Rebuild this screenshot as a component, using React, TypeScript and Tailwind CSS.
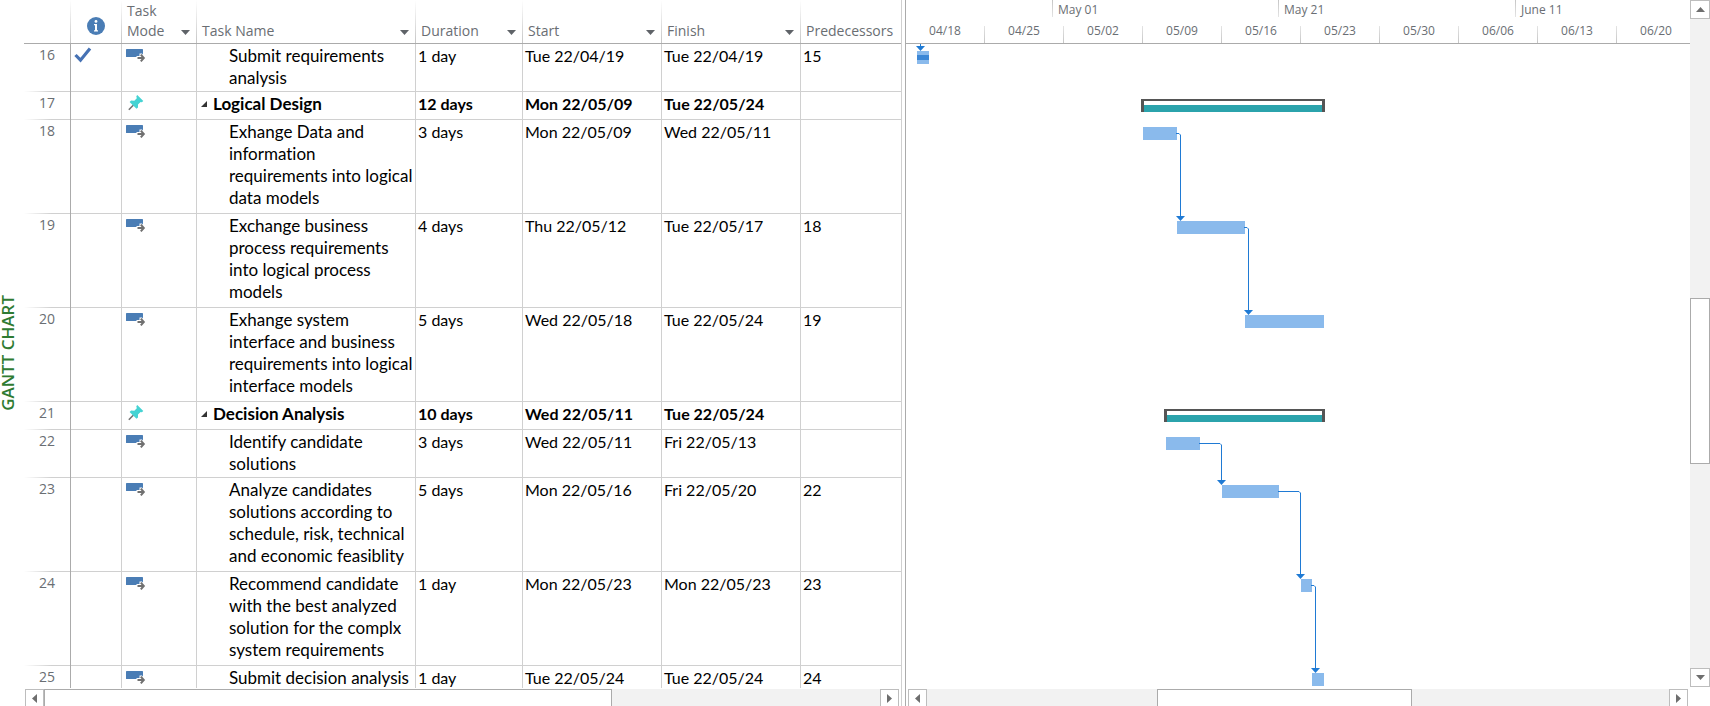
import React from "react";

type Task = {
  id: number;
  name: string;
  duration: string;
  start: string;
  finish: string;
  pred?: string;
  done?: boolean;
  summary?: boolean;
  height: string;
};

const tasks: Task[] = [
  { id: 16, name: "Submit requirements\nanalysis", duration: "1 day", start: "Tue 22/04/19", finish: "Tue 22/04/19", pred: "15", done: true, height: "h-[48px]" },
  { id: 17, name: "Logical Design", duration: "12 days", start: "Mon 22/05/09", finish: "Tue 22/05/24", summary: true, height: "h-[28px]" },
  { id: 18, name: "Exhange Data and\ninformation\nrequirements into logical\ndata models", duration: "3 days", start: "Mon 22/05/09", finish: "Wed 22/05/11", height: "h-[94px]" },
  { id: 19, name: "Exchange business\nprocess requirements\ninto logical process\nmodels", duration: "4 days", start: "Thu 22/05/12", finish: "Tue 22/05/17", pred: "18", height: "h-[94px]" },
  { id: 20, name: "Exhange system\ninterface and business\nrequirements into logical\ninterface models", duration: "5 days", start: "Wed 22/05/18", finish: "Tue 22/05/24", pred: "19", height: "h-[94px]" },
  { id: 21, name: "Decision Analysis", duration: "10 days", start: "Wed 22/05/11", finish: "Tue 22/05/24", summary: true, height: "h-[28px]" },
  { id: 22, name: "Identify candidate\nsolutions", duration: "3 days", start: "Wed 22/05/11", finish: "Fri 22/05/13", height: "h-[48px]" },
  { id: 23, name: "Analyze candidates\nsolutions according to\nschedule, risk, technical\nand economic feasiblity", duration: "5 days", start: "Mon 22/05/16", finish: "Fri 22/05/20", pred: "22", height: "h-[94px]" },
  { id: 24, name: "Recommend candidate\nwith the best analyzed\nsolution for the complx\nsystem requirements", duration: "1 day", start: "Mon 22/05/23", finish: "Mon 22/05/23", pred: "23", height: "h-[94px]" },
  { id: 25, name: "Submit decision analysis", duration: "1 day", start: "Tue 22/05/24", finish: "Tue 22/05/24", pred: "24", height: "h-[28px]" },
];

const weeks = ["04/18", "04/25", "05/02", "05/09", "05/16", "05/23", "05/30", "06/06", "06/13", "06/20"];

const months = [
  { label: "", width: "w-[147px]" },
  { label: "May 01", width: "w-[226px]" },
  { label: "May 21", width: "w-[237px]" },
  { label: "June 11", width: "w-[237px]" },
];

// Bars are [x, y, width] in chart units, measured from the top left of the plot.
const bars = [
  [11, 7, 12],
  [237, 83, 34],
  [271, 177, 68],
  [339, 271, 79],
  [260, 393, 34],
  [316, 441, 57],
  [395, 535, 11],
  [406, 629, 12],
];

const summaries = [
  [235, 55, 184],
  [258, 365, 161],
];

// Links are [x1, y1, x2, y2]: out of one bar, then down to the next.
const links = [
  [270, 89, 274, 177],
  [338, 183, 342, 271],
  [293, 399, 315, 441],
  [372, 447, 394, 535],
  [405, 541, 409, 629],
];

type Dir = "up" | "down" | "left" | "right";

const points: Record<Dir, string> = {
  down: "0,0 9,0 4.5,5",
  up: "0,5 9,5 4.5,0",
  left: "5,0 5,9 0,4.5",
  right: "0,0 0,9 5,4.5",
};

function Triangle({ dir, className }: { dir: Dir; className: string }) {
  const flat = dir === "up" || dir === "down";
  return (
    <svg className={className} width={flat ? 9 : 5} height={flat ? 5 : 9} fill="currentColor" aria-hidden="true">
      <polygon points={points[dir]} />
    </svg>
  );
}

function ScrollButton({ dir, label, className }: { dir: Dir; label: string; className: string }) {
  return (
    <button
      type="button"
      aria-label={label}
      className={`flex shrink-0 items-center justify-center border border-[#bdbdbd] bg-white text-[#6e6e6e] ${className}`}
    >
      <Triangle dir={dir} className="block" />
    </button>
  );
}

function AutoIcon() {
  return (
    <svg width="20" height="14" viewBox="0 0 20 14" aria-hidden="true">
      <rect width="17" height="8" rx="0.6" fill="#4a7db5" />
      <path d="M10.500 7H13.500V4.500H16L18 7V8.500H10.500z" fill="#fff" />
      <path d="M11.500 9h6M14.800 5.700l3 3.300-3 3.300" fill="none" stroke="#707070" strokeWidth="2" />
    </svg>
  );
}

function PinIcon() {
  return (
    <svg width="16" height="16" viewBox="0 0 16 16" aria-hidden="true">
      <path d="M6 9.500L0.800 14.700" stroke="#737373" strokeWidth="1.600" />
      <path d="M9.300 0L15.300 6L13.800 7.200L12.600 6.900L10 9.500L10 12.600L8.500 13.800L1.600 6.900L3.100 5.600L6.300 5.700L8.800 3.300L8.300 1.300Z" fill="#45d3d3" />
    </svg>
  );
}

function CheckIcon() {
  return (
    <svg width="18" height="16" viewBox="0 0 18 16" aria-label="Completed" role="img">
      <path d="M1.500 8L6.500 13.200L16 1.500" fill="none" stroke="#4672b4" strokeWidth="3.200" />
    </svg>
  );
}

function InfoIcon() {
  return (
    <svg width="18" height="18" viewBox="0 0 18 18" aria-label="Indicators" role="img">
      <circle cx="9" cy="9" r="9" fill="#4a7db5" />
      <circle cx="9" cy="4.400" r="1.400" fill="#fff" />
      <path d="M7 7h3v6.200h1v1.300H7v-1.300h1V8.300H7z" fill="#fff" />
    </svg>
  );
}

const headLine =
  "bg-[linear-gradient(to_bottom,#ffffff,#c6c6c6)] bg-[length:1px_100%] bg-right bg-no-repeat border-b border-[#ababab]";

function HeadCell({ label, filter = true, line = true }: { label: string; filter?: boolean; line?: boolean }) {
  return (
    <th scope="col" className={`p-0 text-left align-bottom font-normal ${line ? headLine : "border-b border-[#ababab]"}`}>
      <div className="flex items-end justify-between pr-[7px] pb-0.5 pl-[5px]">
        <span className="whitespace-pre-line">{label}</span>
        {filter && (
          <button type="button" aria-label={`Filter ${label}`} className="pb-[6px] text-[#5f6368]">
            <Triangle dir="down" className="block" />
          </button>
        )}
      </div>
    </th>
  );
}

function TaskTable() {
  const cell = "border-r border-b border-[#d0d0d0] p-0 align-top";
  return (
    <table className="w-full table-fixed border-separate border-spacing-0">
      <colgroup>
        <col className="w-[47px]" />
        <col className="w-[51px]" />
        <col className="w-[75px]" />
        <col className="w-[219px]" />
        <col className="w-[107px]" />
        <col className="w-[139px]" />
        <col className="w-[139px]" />
        <col />
      </colgroup>
      <thead className="font-['Open_Sans',sans-serif] text-[14px] leading-5 text-[#6a6e73]">
        <tr className="h-11">
          <th className={`p-0 ${headLine}`} aria-label="Row" />
          <th scope="col" className={`p-0 align-bottom ${headLine}`}>
            <div className="flex justify-center pr-0.5 pb-2">
              <InfoIcon />
            </div>
          </th>
          <HeadCell label={"Task\nMode"} />
          <HeadCell label="Task Name" />
          <HeadCell label="Duration" />
          <HeadCell label="Start" />
          <HeadCell label="Finish" />
          <HeadCell label="Predecessors" filter={false} line={false} />
        </tr>
      </thead>
      <tbody className="font-[Lato,sans-serif] text-[16px] leading-[22px] text-black [font-variant-ligatures:none]">
        {tasks.map((t) => (
          <tr key={t.id} className={`${t.height} ${t.summary ? "font-bold" : ""}`}>
            <th
              scope="row"
              className="border-r border-[#ababab] bg-[linear-gradient(to_right,#ffffff,#d0d0d0_60%)] bg-[length:100%_1px] bg-bottom bg-no-repeat p-0 pr-[15px] text-right align-top font-['Open_Sans',sans-serif] text-[14px] font-normal text-[#6a6e73]"
            >
              {t.id}
            </th>
            <td className={cell}>
              {t.done && (
                <div className="pt-[3px] pl-[3px]">
                  <CheckIcon />
                </div>
              )}
            </td>
            <td className={cell}>
              <div className={t.summary ? "pt-[3px] pl-1.5" : "pt-[5px] pl-1"}>{t.summary ? <PinIcon /> : <AutoIcon />}</div>
            </td>
            <td className={`${cell} text-[17px]`}>
              {t.summary ? (
                <div className="flex items-center gap-1.5 pt-px pl-1">
                  <button type="button" aria-label={`Collapse ${t.name}`}>
                    <svg className="block" width="6" height="6" aria-hidden="true">
                      <polygon points="6,0 6,6 0,6" fill="#333" />
                    </svg>
                  </button>
                  {t.name}
                </div>
              ) : (
                <div className="pt-px pl-8 whitespace-pre">{t.name}</div>
              )}
            </td>
            <td className={cell}>
              <div className="pt-px pl-0.5">{t.duration}</div>
            </td>
            <td className={cell}>
              <div className="pt-px pl-0.5">{t.start}</div>
            </td>
            <td className={cell}>
              <div className="pt-px pl-0.5">{t.finish}</div>
            </td>
            <td className="border-b border-[#d0d0d0] p-0 align-top">
              <div className="pt-px pl-0.5">{t.pred}</div>
            </td>
          </tr>
        ))}
      </tbody>
    </table>
  );
}

function Timescale() {
  return (
    <div className="flex h-11 shrink-0 flex-col justify-between overflow-hidden border-b border-[#ababab] font-['Open_Sans',sans-serif] text-[12px] text-[#6a6e73]">
      <div className="flex h-[17px]">
        {months.map((m, i) => (
          <div key={i} className={`flex shrink-0 justify-between ${m.width}`}>
            <span className="pl-[5px] leading-5">{m.label}</span>
            <span className="w-px bg-linear-to-b from-[#c6c6c6] to-[#e4e4e4]" />
          </div>
        ))}
      </div>
      <div className="flex h-[17px]">
        {weeks.map((w) => (
          <div key={w} className="flex w-[79px] shrink-0">
            <span className="flex-1 text-center leading-[10px]">{w}</span>
            <span className="w-px bg-linear-to-b from-[#e4e4e4] to-[#c6c6c6]" />
          </div>
        ))}
      </div>
    </div>
  );
}

function Plot() {
  return (
    <svg className="block min-h-0 w-full flex-1" role="img" aria-label="Gantt bars">
      {bars.map(([x, y, w]) => (
        <rect key={`${x}-${y}`} x={x} y={y} width={w} height="13" fill="#8abaec" />
      ))}
      <rect x="11" y="11" width="12" height="5" fill="#3c87d6" />
      <path d="M14.500 0v3" stroke="#1f7ad4" />
      <polygon points="10,2 19,2 14.500,7" fill="#1f7ad4" />
      {summaries.map(([x, y, w]) => (
        <g key={y}>
          <rect x={x} y={y} width={w} height="13" fill="#555" />
          <rect x={x + 3} y={y + 2} width={w - 6} height="4" fill="#fff" />
          <rect x={x + 3} y={y + 6} width={w - 6} height="7" fill="#2ba3ac" />
        </g>
      ))}
      {links.map(([x1, y1, x2, y2]) => (
        <g key={y1}>
          <path d={`M${x1} ${y1 + 0.5}H${x2 - 1}L${x2 + 0.5} ${y1 + 2}V${y2 - 3}`} fill="none" stroke="#1f7ad4" />
          <polygon points={`${x2 - 4},${y2 - 5} ${x2 + 5},${y2 - 5} ${x2 + 0.5},${y2}`} fill="#1f7ad4" />
        </g>
      ))}
    </svg>
  );
}

export default function App() {
  return (
    <div className="flex h-screen overflow-hidden bg-white">
      <aside className="flex w-6 shrink-0 items-center">
        <h1 className="rotate-180 font-['Open_Sans',sans-serif] text-[17px] leading-4 font-semibold whitespace-nowrap text-[#2f7b32] [writing-mode:vertical-rl]">
          GANTT CHART
        </h1>
      </aside>

      <main className="flex min-w-0 flex-1 gap-[3px]">
        <section aria-label="Task list" className="flex w-[878px] shrink-0 flex-col border-r border-[#d0d0d0]">
          <div className="min-h-0 flex-1 overflow-hidden">
            <TaskTable />
          </div>
          <div className="mt-px mr-0.5 ml-px flex h-[17px] shrink-0 overflow-hidden bg-[#f2f2f2]">
            <ScrollButton dir="left" label="Scroll table left" className="h-[19px] w-[19px]" />
            <div className="h-5 w-[568px] border border-[#ababab] bg-white" />
            <div className="flex-1" />
            <ScrollButton dir="right" label="Scroll table right" className="h-[19px] w-[19px]" />
          </div>
        </section>

        <section aria-label="Chart" className="flex min-w-0 flex-1 border-l border-[#ababab]">
          <div className="flex min-w-0 flex-1 flex-col">
            <Timescale />
            <Plot />
            <div className="mt-px mr-0.5 ml-0.5 flex h-[17px] shrink-0 overflow-hidden bg-[#f2f2f2]">
              <ScrollButton dir="left" label="Scroll chart left" className="h-[19px] w-[19px]" />
              <div className="flex flex-1">
                <div className="w-[31%]" />
                <div className="h-5 w-[255px] border border-[#ababab] bg-white" />
              </div>
              <ScrollButton dir="right" label="Scroll chart right" className="h-[19px] w-[19px]" />
            </div>
          </div>
          <div className="mb-[19px] flex w-5 shrink-0 flex-col bg-[#f2f2f2]">
            <ScrollButton dir="up" label="Scroll up" className="h-[19px]" />
            <div className="flex min-h-0 flex-1 flex-col">
              <div className="h-[43%]" />
              <div className="h-[166px] shrink-0 border border-[#ababab] bg-white" />
            </div>
            <ScrollButton dir="down" label="Scroll down" className="h-[19px]" />
          </div>
        </section>
      </main>
    </div>
  );
}
